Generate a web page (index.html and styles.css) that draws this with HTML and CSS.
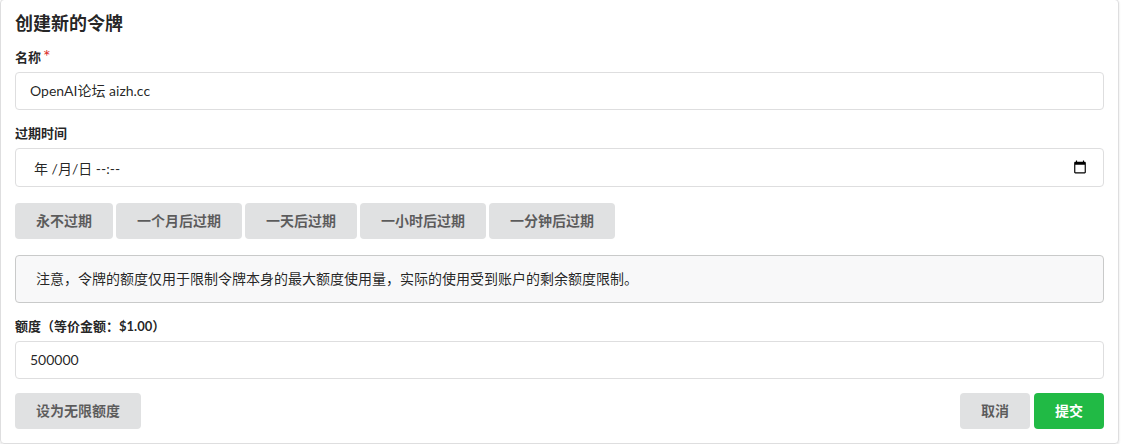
FILE: index.html
```html
<!DOCTYPE html>
<html lang="zh-CN">
<head>
<meta charset="utf-8">
<title>创建新的令牌</title>
<link rel="stylesheet" href="styles.css">
</head>
<body>
<main class="segment">
  <h1 class="header">创建新的令牌</h1>
  <form class="form">
    <div class="field">
      <label class="label" for="name">名称<span class="required">*</span></label>
      <input class="input" id="name" type="text" value="OpenAI论坛 aizh.cc" required>
    </div>
    <div class="field">
      <label class="label" for="expires">过期时间</label>
      <div class="date-box">
        <input class="date-input" id="expires" type="text" value="年 /月/日 --:--">
        <button class="picker" type="button" aria-label="选择日期">
          <svg class="picker-icon" viewBox="0 0 24 24" aria-hidden="true"><path d="M20 3h-1V1h-2v2H7V1H5v2H4c-1.100 0-2 .9-2 2v16c0 1.100.9 2 2 2h16c1.100 0 2-.9 2-2V5c0-1.100-.9-2-2-2zm0 18H4V8h16v13z"/></svg>
        </button>
      </div>
    </div>
    <div class="presets">
      <button class="button" type="button">永不过期</button>
      <button class="button" type="button">一个月后过期</button>
      <button class="button" type="button">一天后过期</button>
      <button class="button" type="button">一小时后过期</button>
      <button class="button" type="button">一分钟后过期</button>
    </div>
    <p class="message">注意，令牌的额度仅用于限制令牌本身的最大额度使用量，实际的使用受到账户的剩余额度限制。</p>
    <div class="field">
      <label class="label" for="quota">额度（等价金额：$1.00）</label>
      <input class="input" id="quota" type="text" inputmode="numeric" value="500000">
    </div>
    <div class="actions">
      <button class="button" type="button">设为无限额度</button>
      <div class="actions-end">
        <button class="button" type="button">取消</button>
        <button class="button button-positive" type="submit">提交</button>
      </div>
    </div>
  </form>
</main>
</body>
</html>
```
FILE: styles.css
```css
* {
  box-sizing: border-box;
}

body {
  margin: 0;
  background: #fff;
  color: rgba(0, 0, 0, 0.87);
  font-family: Lato, "Noto Sans CJK SC", sans-serif;
  font-size: 14px;
  line-height: 20px;
}

.segment {
  margin: -1px 2px 0 0;
  padding: 13px 14px 14px;
  border: 1px solid #dededf;
  border-radius: 4px;
  box-shadow: 0 1px 2px rgba(34, 36, 38, 0.15);
}

.header {
  margin: 0 0 15px;
  font-size: 18px;
  font-weight: 700;
  line-height: 20px;
}

.form {
  display: flex;
  flex-direction: column;
}

.field {
  display: flex;
  flex-direction: column;
  gap: 5px;
  margin-bottom: 14px;
}

.label {
  font-size: 13px;
  font-weight: 700;
  line-height: 19px;
}

.required {
  margin-left: 2px;
  color: #db2828;
  font-size: 18px;
  font-weight: 400;
  line-height: 0;
  vertical-align: -1px;
}

.input,
.date-box {
  width: 100%;
  height: 38px;
  border: 1px solid #dededf;
  border-radius: 4px;
  background: #fff;
}

.input,
.date-input {
  color: inherit;
  font: inherit;
  outline: 0;
}

.input {
  padding: 0 14px 2px;
}

.date-box {
  display: flex;
  align-items: center;
  height: 39px;
  padding: 0 14px 0 18px;
}

.date-input {
  flex: 1;
  min-width: 0;
  padding: 2px 0 0;
  border: 0;
  background: none;
}

.picker {
  display: flex;
  padding: 1px 2px 3px;
  border: 0;
  background: none;
}

.picker-icon {
  width: 14px;
  height: 14px;
  fill: #000;
}

.presets {
  display: flex;
  flex-wrap: wrap;
  gap: 3px;
  margin: 2px 0 16px;
}

.button {
  height: 36px;
  padding: 0 21px;
  border: 0;
  border-radius: 4px;
  background: #e0e1e2;
  color: rgba(0, 0, 0, 0.6);
  font: inherit;
  font-weight: 700;
}

.button-positive {
  background: #21ba45;
  color: #fff;
}

.message {
  margin: 0 0 14px;
  padding: 13px 20px;
  border: 1px solid #c9caca;
  border-radius: 4px;
  background: #f8f8f9;
}

.actions {
  display: flex;
  justify-content: space-between;
}

.actions-end {
  display: flex;
  gap: 4px;
}
```
